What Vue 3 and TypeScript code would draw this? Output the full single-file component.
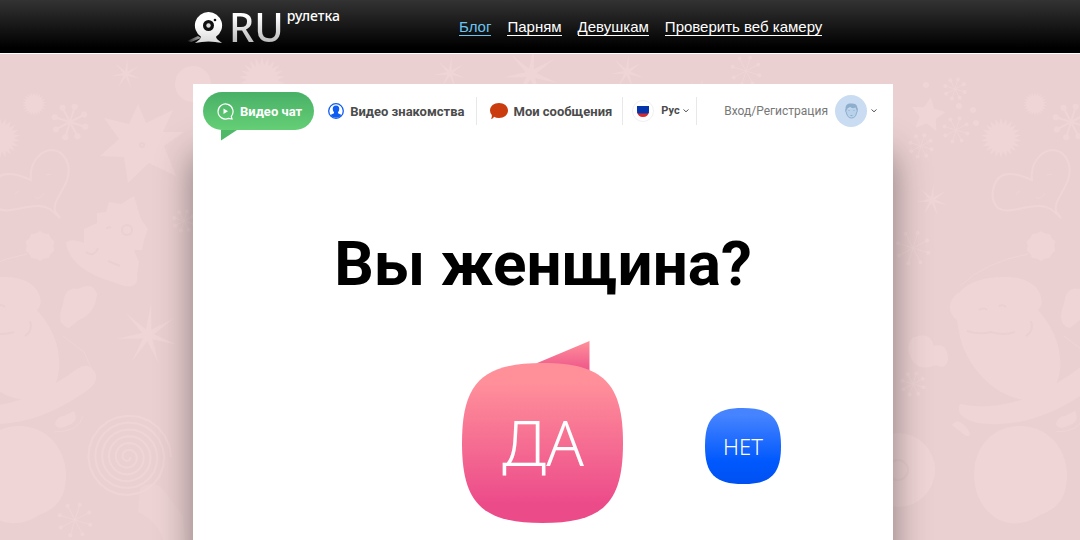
<script setup lang="ts">
import { ref } from 'vue'

interface NavLink {
  label: string
  active?: boolean
}

type Mark = [x: number, y: number, r: number]

const navLinks: NavLink[] = [
  { label: 'Блог', active: true },
  { label: 'Парням' },
  { label: 'Девушкам' },
  { label: 'Проверить веб камеру' },
]

const languages = ['Рус', 'Eng']
const language = ref('Рус')

function star([cx, cy, r]: Mark, tips: number, inner: number, turn = 0): string {
  const points: string[] = []
  for (let i = 0; i < tips * 2; i++) {
    const radius = i % 2 === 0 ? r : r * inner
    const angle = turn - Math.PI / 2 + (i * Math.PI) / tips
    points.push(`${(cx + radius * Math.cos(angle)).toFixed(1)},${(cy + radius * Math.sin(angle)).toFixed(1)}`)
  }
  return points.join(' ')
}

function spokes([cx, cy, r]: Mark): { x: number; y: number }[] {
  return Array.from({ length: 8 }, (_, i) => ({
    x: cx + r * Math.cos((i * Math.PI) / 4 + 0.3),
    y: cy + r * Math.sin((i * Math.PI) / 4 + 0.3),
  }))
}

function spiral([cx, cy, r]: Mark, turns: number): string {
  const steps = turns * 24
  let d = ''
  for (let i = 0; i <= steps; i++) {
    const radius = 2 + ((r - 2) * i) / steps
    const angle = (i * Math.PI) / 12
    d += `${i ? 'L' : 'M'}${(cx + radius * Math.cos(angle)).toFixed(1)} ${(cy + radius * Math.sin(angle)).toFixed(1)}`
  }
  return d
}

const bursts: Mark[] = [[262, 80, 23]]
const sparkles: Mark[] = [
  [126, 74, 15], [450, 73, 16], [531, 74, 28], [627, 72, 17],
  [701, 92, 14], [932, 200, 16], [148, 335, 31],
]
const flakes: Mark[] = [
  [746, 71, 14], [955, 89, 10], [956, 130, 12], [921, 146, 11],
  [913, 248, 16], [75, 520, 16], [913, 384, 11], [184, 221, 10],
]
const repeatedBursts: Mark[] = [[1001, 138, 20], [1035, 104, 12]]
const repeatedFlakes: Mark[] = [[1071, 122, 16]]
</script>

<template>
  <div class="page">
    <svg class="backdrop" viewBox="0 0 1080 540" preserveAspectRatio="xMidYMin slice" aria-hidden="true">
      <defs>
        <g id="santa">
          <polygon v-for="(m, i) in repeatedBursts" :key="i" :points="star(m, 22, 0.68)" />
          <g v-for="(m, i) in repeatedFlakes" :key="`f${i}`">
            <template v-for="(p, k) in spokes(m)" :key="k">
              <line class="line" :x1="m[0]" :y1="m[1]" :x2="p.x" :y2="p.y" />
              <circle :cx="p.x" :cy="p.y" r="3" />
            </template>
          </g>
          <path class="line" d="M1032 180C1030 162 1042 150 1053 150C1066 151 1073 165 1068 180C1062 195 1054 202 1056 211L1061 218C1054 211 1048 205 1038 206C1020 207 1008 214 998 208C988 198 993 180 1003 175C1014 172 1024 177 1032 180Z" />
          <path class="line faint" d="M1016 194l4-3M1047 175l5-1M1036 197q4 4 9-4" />
          <polygon :points="star([1041, 246, 15], 10, 0.88)" />
          <path d="M960 292C970 280 988 277 1006 277C1024 277 1036 284 1040 294C1044 304 1040 308 1038 310C1054 328 1062 348 1060 370C1058 390 1044 400 1026 400C998 398 968 370 960 337L957 320C948 314 946 300 960 292Z" />
          <path class="line faint" d="M960 286Q985 262 1028 254" />
          <path class="dark" d="M979 310q5-3 8 0M999 306q4-2 7 1M967 331q12 4 24 1q12 4 24 0M1031 321q3 10-5 15" />
          <path d="M960 404Q1014 416 1078 369Q1088 362 1094 370C1102 378 1094 388 1083 394Q1030 430 978 423Q954 417 960 404Z" />
          <path d="M1020 426C1046 426 1066 446 1067 474C1067 500 1056 509 1040 515C1026 525 1006 527 992 515C977 503 972 484 975 464C980 440 998 426 1020 426Z" />
          <path d="M1064 304q2-18 15-15q15-8 19 5q-2 20-18 26l-10 8q-14-3-6-24Z" />
          <path class="line faint" d="M1064 336L1085 352L1094 372M1055 432Q1080 432 1084 416" />
          <path d="M1056 424q2-8 9-8l10-5q5 10-5 14q-11 6-14-1Z" />
        </g>
      </defs>
      <use href="#santa" />
      <use href="#santa" x="-1001" />
      <polygon v-for="(m, i) in bursts" :key="`b${i}`" :points="star(m, 22, 0.65)" />
      <polygon v-for="(m, i) in sparkles" :key="`s${i}`" :points="star(m, 7, 0.2, 0.1)" />
      <g v-for="(m, i) in flakes" :key="`k${i}`">
        <template v-for="(p, k) in spokes(m)" :key="k">
          <line class="line faint" :x1="m[0]" :y1="m[1]" :x2="p.x" :y2="p.y" />
          <circle :cx="p.x" :cy="p.y" r="2" />
        </template>
      </g>
      <path d="M138 104L146 123L173 110L163 132L184 132L164 146L176 176L149 163L128 183L124 157L100 156L119 139L104 118L129 124Z" />
      <circle class="dark" cx="142" cy="145" r="2" />
      <polygon :points="star([928, 115, 18], 5, 0.48, 0.15)" />
      <path d="M66 243C70 239 76 240 84 243L84 229L97 223V213L106 212L109 202L121 204L134 196L139 213L141 219L148 229L144 240L142 250L134 250L139 262L137 275C139 287 129 289 116 283C96 277 70 267 66 243Z" />
      <path class="dark" d="M122 230a5 5 0 1 0 10 0a5 5 0 1 0-10 0M106 228l5-1M86 252q8 6 12-4M108 261l12 5" />
      <circle cx="193" cy="84" r="18" />
      <path class="line" :d="spiral([128, 457, 43], 6)" />
      <path d="M140 488q15-10 25 4l18 24l2 24h-22q-5-18-25-28Z" opacity=".5" />
      <path d="M912 338q18-8 22 8q14-4 14 14q-2 10-12 5q-14 6-22-2q-10-14-2-25Z" />
      <path d="M952 425q5-8 14 2q8 10 0 9Z" />
      <circle cx="898" cy="470" r="37" />
      <circle class="dark" cx="898" cy="470" r="10" />
      <circle cx="926" cy="85" r="3" /><circle cx="973" cy="110" r="3" />
      <circle cx="959" cy="106" r="3" /><circle cx="976" cy="123" r="3" />
    </svg>

    <header class="header">
      <div class="header-inner">
        <a class="logo" href="#" aria-label="RU рулетка">
          <svg class="logo-cam" width="41" height="32" viewBox="0 0 41 32" aria-hidden="true">
            <defs>
              <linearGradient id="trail"><stop offset="0" stop-color="#fff" stop-opacity="0" /><stop offset="1" stop-color="#aaa" /></linearGradient>
              <linearGradient id="cam" x2="0" y2="1"><stop offset=".4" stop-color="#fff" /><stop offset="1" stop-color="#d8d8d8" /></linearGradient>
            </defs>
            <path d="M0 29L11 24L14 26L4 30Z" fill="url(#trail)" />
            <path d="M21.500 0A13.500 13.500 0 0 1 29 24.800Q29 27 35 31Q21.500 28 8 31Q14 27 14 24.800A13.500 13.500 0 0 1 21.500 0Z" fill="url(#cam)" />
            <circle cx="21.500" cy="13.500" r="5.500" fill="#111" />
            <circle cx="21.500" cy="13.500" r="2.200" fill="#ddd" />
            <circle cx="28" cy="8" r="1.300" fill="#111" />
          </svg>
          <span class="logo-ru">RU</span>
          <span class="logo-word">рулетка</span>
        </a>
        <nav class="nav">
          <a v-for="link in navLinks" :key="link.label" href="#" :class="{ active: link.active }">{{ link.label }}</a>
        </nav>
      </div>
    </header>

    <main class="panel">
      <nav class="menu">
        <a class="pill" href="#">
          <svg width="17" height="17" viewBox="0 0 17 17" fill="none" stroke="#fff" aria-hidden="true">
            <path d="M14.300 13.300A7.500 7.500 0 1 0 11.500 15.400L15 16Z" stroke-width="1.200" />
            <path d="M6.500 5.500L11 8.200L6.500 11Z" fill="#fff" stroke="none" />
          </svg>
          Видео чат
          <svg class="pill-tail" width="16" height="11" viewBox="0 0 16 11" aria-hidden="true"><path d="M0 0H16L0 10.500Z" fill="#4fb969" /></svg>
        </a>
        <a class="item dating" href="#">
          <svg width="16" height="16" viewBox="0 0 16 16" aria-hidden="true">
            <circle cx="8" cy="8" r="7.300" fill="#fff" stroke="#0f5cf0" stroke-width="1.300" />
            <path d="M8 2.500C10.800 2.500 11.500 4.500 11.200 6.500C11 8 10.400 8.800 10 9.300V10.300L13.600 12A7 7 0 0 1 2.400 12L6 10.300V9.300C5.600 8.800 5 8 4.800 6.500C4.500 4.500 5.200 2.500 8 2.500Z" fill="#0f5cf0" />
          </svg>
          Видео знакомства
        </a>
        <a class="item messages" href="#">
          <svg width="18" height="16" viewBox="0 0 18 16" aria-hidden="true">
            <path d="M9 0C14 0 18 3 18 7.500S14 15 9 15Q6 15 4 13.800Q3.500 15.500 1 16Q2.200 14 1.800 12Q0 10 0 7.500C0 3 4 0 9 0Z" fill="#ca3c0e" />
          </svg>
          Мои сообщения
        </a>
        <label class="language">
          <svg width="22" height="22" viewBox="0 0 22 22" aria-hidden="true">
            <circle cx="11" cy="11" r="10.500" fill="#fff" stroke="#f0f0f0" />
            <path d="M5 12H17Q16 17 11 17T5 12Z" fill="#d52b30" />
            <path d="M5 6H17V11Q17 13 16 13.500H6Q5 13 5 11Z" fill="#0535ad" />
          </svg>
          <select v-model="language" aria-label="Язык">
            <option v-for="name in languages" :key="name">{{ name }}</option>
          </select>
          <svg class="chevron" width="6" height="4" viewBox="0 0 6 4" aria-hidden="true"><path d="M.5 .5L3 2.800L5.500 .5" /></svg>
        </label>
        <button class="login" type="button">
          Вход/Регистрация
          <svg width="32" height="32" viewBox="0 0 32 32" aria-hidden="true">
            <circle cx="16" cy="16" r="16" fill="#c9dcf1" />
            <path d="M11 14Q10 16 11.500 18Q12.500 23 16.500 23T21.500 18Q23 16 22 13" fill="#b9d2eb" stroke="#8eaecb" />
            <path d="M11 16C9 9 14 8 17 8.500C22 8.500 23 12 22 16L20.500 12.500Q17 14 15 12Q12 13 11 16Z" fill="#8eaecb" />
            <path d="M13.500 15.500h1M18.500 15.500h1M15.500 20.500h2" fill="none" stroke="#8eaecb" />
          </svg>
          <svg class="chevron" width="6" height="4" viewBox="0 0 6 4" aria-hidden="true"><path d="M.5 .5L3 2.800L5.500 .5" /></svg>
        </button>
      </nav>

      <h1>Вы женщина?</h1>

      <div class="answers">
        <button class="answer yes" type="button">
          <svg width="162" height="182" viewBox="0 0 162 182" aria-hidden="true">
            <defs>
              <linearGradient id="pink" x2="0" y2="1"><stop offset=".12" stop-color="#ff909a" /><stop offset=".88" stop-color="#ec4b8a" /></linearGradient>
              <linearGradient id="pink-tail" x2="0" y2="1"><stop offset="0" stop-color="#ff909a" /><stop offset="1" stop-color="#ee5589" /></linearGradient>
            </defs>
            <path d="M74 22.500L127.500 0V30Z" fill="url(#pink-tail)" />
            <path d="M80.500 22C141 22 161 42 161 102S141 182 80.500 182S0 162 0 102S20 22 80.500 22Z" fill="url(#pink)" />
          </svg>
          <span>ДА</span>
        </button>
        <button class="answer no" type="button">
          <svg width="76" height="76" viewBox="0 0 76 76" aria-hidden="true">
            <defs>
              <linearGradient id="blue" x2="0" y2="1"><stop offset=".1" stop-color="#4583ff" /><stop offset=".7" stop-color="#0059fd" /><stop offset="1" stop-color="#0050f2" /></linearGradient>
            </defs>
            <path d="M38 0C66 0 76 10 76 38S66 76 38 76S0 66 0 38S10 0 38 0Z" fill="url(#blue)" />
          </svg>
          <span>НЕТ</span>
        </button>
      </div>
    </main>
  </div>
</template>

<style>
body {
  margin: 0;
}
</style>

<style scoped>
.page {
  position: relative;
  display: flex;
  flex-direction: column;
  box-sizing: border-box;
  min-height: 100vh;
  overflow: hidden;
  background: #ebd0d1;
  font-family: Roboto, "Liberation Sans", sans-serif;
}

.backdrop {
  position: absolute;
  inset: 0;
  width: 100%;
  height: 100%;
  fill: #f0d5d6;
}

.backdrop .line {
  fill: none;
  stroke: #f0d5d6;
  stroke-width: 2;
}

.backdrop .faint {
  stroke-width: 1;
}

.backdrop .dark {
  fill: none;
  stroke: #ebd0d1;
  stroke-width: 2;
}

.header {
  position: relative;
  border-bottom: 1px solid #fff;
  background: linear-gradient(#333, #000 90%);
}

.header-inner {
  display: flex;
  box-sizing: border-box;
  width: 100%;
  max-width: 718px;
  height: 53px;
  margin: 0 auto;
  padding-left: 6px;
}

.logo {
  display: flex;
  flex: none;
  width: 272px;
  color: #fff;
  font-family: "Noto Sans", "Open Sans", sans-serif;
  font-weight: 500;
  text-decoration: none;
}

.logo-cam {
  flex: none;
  margin-top: 12px;
}

.logo-ru {
  margin-left: 1px;
  background: linear-gradient(#fff 30%, #bbb 80%);
  background-clip: text;
  color: transparent;
  font-size: 40px;
  line-height: 54px;
}

.logo-word {
  margin-left: 3px;
  font-size: 14px;
  line-height: 32px;
}

.nav {
  display: flex;
  align-items: center;
  gap: 16px;
  padding-top: 2px;
}

.nav a {
  border-bottom: 1px solid;
  color: #fff;
  font: 15px/16px "Liberation Sans", Arial, sans-serif;
  text-decoration: none;
  white-space: nowrap;
}

.nav a.active {
  color: #6cc5f0;
}

.panel {
  position: relative;
  flex: 1;
  box-sizing: border-box;
  width: calc(100% - 6px);
  max-width: 706px;
  margin: 30px auto 0;
  padding-left: 6px;
}

.panel::before {
  content: "";
  position: absolute;
  inset: 0 0 0 6px;
  background: #fff;
  box-shadow: 0 70px 34px rgba(0, 0, 0, 0.42);
}

.menu {
  position: relative;
  display: flex;
  align-items: center;
  padding: 8px 16px 0 10px;
  color: #4b4b4b;
  font-size: 13px;
  font-weight: 700;
  white-space: nowrap;
}

.pill,
.item {
  display: flex;
  align-items: center;
  gap: 6px;
  color: inherit;
  text-decoration: none;
}

.pill {
  position: relative;
  box-sizing: border-box;
  height: 38px;
  padding: 0 12px 0 14px;
  border-radius: 19px;
  background: linear-gradient(#48b067, #64cf75);
  color: #fff;
}

.pill-tail {
  position: absolute;
  top: 100%;
  left: 18px;
}

.item,
.language {
  height: 28px;
  border-right: 1px solid #e8e8e8;
}

.dating {
  padding: 0 11px 0 14px;
}

.messages {
  padding: 0 10px 0 13px;
}

.language {
  display: flex;
  align-items: center;
  padding: 0 7px 0 9px;
}

.language select {
  appearance: none;
  width: 21px;
  margin: 0 1px 0 7px;
  padding: 0;
  border: 0;
  background: none;
  color: inherit;
  font: 700 11px/16px Roboto, sans-serif;
}

.chevron {
  flex: none;
  fill: none;
  stroke: #555;
}

.login {
  display: flex;
  align-items: center;
  margin-left: auto;
  padding: 0;
  border: 0;
  background: none;
  color: #777;
  font: 12px/16px Roboto, sans-serif;
  cursor: pointer;
}

.login svg {
  margin-left: 7px;
}

.login .chevron {
  margin-left: 4px;
}

h1 {
  position: relative;
  margin: 96px 0 0;
  color: #000;
  font-size: 62px;
  font-weight: 700;
  line-height: 76px;
  text-align: center;
}

.answers {
  position: relative;
  display: grid;
  grid-template-columns: 1fr auto 1fr;
  column-gap: 81px;
  align-items: center;
  justify-items: start;
  margin-top: 39px;
}

.answer {
  display: grid;
  place-items: end center;
  padding: 0;
  border: 0;
  background: none;
  color: #fff;
  font-family: "Noto Sans", "Open Sans", sans-serif;
  font-weight: 300;
  cursor: pointer;
}

.answer svg,
.answer span {
  grid-area: 1 / 1;
}

.yes {
  grid-column: 2;
  font-size: 62px;
  line-height: 162px;
}

.no {
  margin-top: 28px;
  font-size: 22px;
  line-height: 76px;
}
</style>
